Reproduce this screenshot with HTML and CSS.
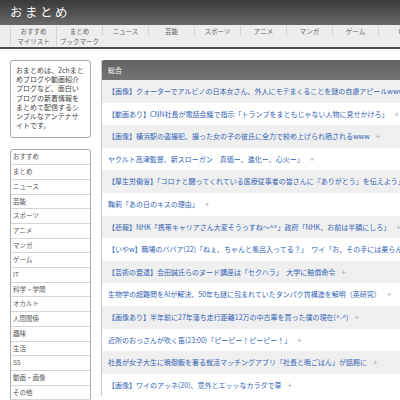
FILE: index.html
```html
<!DOCTYPE html>
<html lang="ja">
<head>
<meta charset="utf-8">
<title>おまとめ</title>
<link rel="stylesheet" href="styles.css">
</head>
<body>
<header class="site-header">
  <h1 class="logo">おまとめ</h1>
</header>
<nav class="gnav">
  <ul class="gnav-list">
    <li>おすすめ</li><li>まとめ</li><li>ニュース</li><li>芸能</li><li>スポーツ</li><li>アニメ</li><li>マンガ</li><li>ゲーム</li><li>IT</li><li>科学・学問</li><li>オカルト</li><li>人間関係</li><li>趣味</li><li>生活</li><li>SS</li><li>動画・画像</li><li>その他</li>
    <li>マイリスト</li><li>ブックマーク</li>
  </ul>
</nav>
<div class="wrap">
  <aside class="side">
    <div class="about">おまとめは、2chまと<br>めブログや動画紹介<br>ブログなど、面白い<br>ブログの新着情報を<br>まとめて配信するシ<br>ンプルなアンテナサ<br>イトです。</div>
    <ul class="cats">
      <li>おすすめ</li><li>まとめ</li><li>ニュース</li><li>芸能</li><li>スポーツ</li><li>アニメ</li><li>マンガ</li><li>ゲーム</li><li>IT</li><li>科学・学問</li><li>オカルト</li><li>人間関係</li><li>趣味</li><li>生活</li><li>SS</li><li>動画・画像</li><li>その他</li>
    </ul>
  </aside>
  <main class="main">
    <div class="main-head">総合</div>
    <ul class="feed">
      <li><a>【画像】クォーターでアルビノの日本女さん、外人にモテまくることを謎の自虐アピールwww</a><span class="plus">+</span></li>
      <li><a>【動画あり】CNN社長が電話会議で指示「トランプをまともじゃない人物に見せかけろ」</a><span class="plus">+</span></li>
      <li><a>【画像】横浜駅の盗撮犯、撮った女の子の彼氏に全力で絞め上げられ晒されるwww</a><span class="plus">+</span></li>
      <li><a>ヤクルト高津監督、新スローガン　真価ー、進化ー、心火ー」</a><span class="plus">+</span></li>
      <li><a>【厚生労働省】「コロナと闘ってくれている医療従事者の皆さんに『ありがとう』を伝えよう」</a><span class="plus">+</span></li>
      <li><a>鞠莉「あの日のキスの理由」</a><span class="plus">+</span></li>
      <li><a>【悲報】NHK「携帯キャリアさん大変そうっすね～^^」政府「NHK、お前は半額にしろ」</a><span class="plus">+</span></li>
      <li><a>【いやw】職場のババア(22)「ねぇ、ちゃんと風呂入ってる？」　ワイ「お、その手には乗らんで」</a><span class="plus">+</span></li>
      <li><a>【芸術の衰退】会田誠氏らのヌード講座は「セクハラ」　大学に賠償命令</a><span class="plus">+</span></li>
      <li><a>生物学の超難問をAIが解決、50年も謎に包まれていたタンパク質構造を解明（英研究）</a><span class="plus">+</span></li>
      <li><a>【画像あり】半年前に27年落ち走行距離12万の中古車を買った僕の現在(^-^)</a><span class="plus">+</span></li>
      <li><a>近所のおっさんが吹く笛(23:00)「ピーピー！ピーピー！」</a><span class="plus">+</span></li>
      <li><a>社長が女子大生に晩御飯を奢る就活マッチングアプリ「社長と晩ごはん」が話題に</a><span class="plus">+</span></li>
      <li><a>【画像】ワイのアッネ(20)、意外とエッッなカラダで草</a><span class="plus">+</span></li>
    </ul>
  </main>
</div>
</body>
</html>
```
FILE: styles.css
```css
html, body {
  margin: 0;
  padding: 0;
  overflow: hidden;
  background: #fff;
}
body {
  width: 800px;
  font-family: "Noto Sans CJK JP", "Noto Sans", sans-serif;
  color: #333;
}
ul {
  list-style: none;
  margin: 0;
  padding: 0;
}
.site-header {
  height: 25px;
  background: linear-gradient(#3a3a3a, #686868);
  display: flex;
  align-items: center;
  padding-left: 10px;
}
.logo {
  margin: 0;
  font-size: 12.5px;
  font-weight: 400;
  color: #fff;
  letter-spacing: 2.5px;
  line-height: 1;
  text-shadow: 0 0 1px rgba(0,0,0,0.4);
}
.gnav {
  background: #ededed;
  padding: 1px 0 1px 10px;
  border-bottom: 2px solid #4d4d4d;
}
.gnav-list {
  display: flex;
  flex-wrap: wrap;
  width: 785px;
}
.gnav-list li {
  width: 45px;
  height: 10px;
  line-height: 10px;
  font-size: 6.5px;
  text-align: center;
  color: #666;
  border-left: 1px solid #d2d2d2;
}
.wrap {
  display: flex;
  gap: 10px;
  padding: 11px 0 0 10px;
  align-items: flex-start;
}
.side {
  width: 81px;
  flex: none;
  display: flex;
  flex-direction: column;
  gap: 11px;
}
.about {
  border: 1px solid #aaa;
  border-radius: 3px;
  padding: 5px 3px 7px 5px;
  font-size: 7px;
  line-height: 9.2px;
  color: #444;
  white-space: nowrap;
}
.cats {
  border: 1px solid #aaa;
  border-radius: 3px;
}
.cats li {
  font-size: 6.5px;
  line-height: 9.7px;
  padding: 2px 2px;
  color: #555;
  border-bottom: 1px solid #d5d5d5;
}
.main {
  flex: 1;
  border-left: 1px solid #c8c8c8;
}
.main-head {
  height: 20px;
  line-height: 20px;
  background: linear-gradient(#626262, #747474);
  color: #fff;
  font-size: 7px;
  padding-left: 6px;
  border-top-left-radius: 2px;
}
.feed li {
  height: 22.6px;
  line-height: 22.6px;
  padding-left: 6px;
  font-size: 7px;
  white-space: nowrap;
  overflow: hidden;
}
.feed li:nth-child(odd) {
  background: #efefef;
}
.feed a {
  color: #3463b4;
  text-decoration: none;
}
.plus {
  color: #aaa;
  margin-left: 6px;
  font-size: 8px;
}
```
